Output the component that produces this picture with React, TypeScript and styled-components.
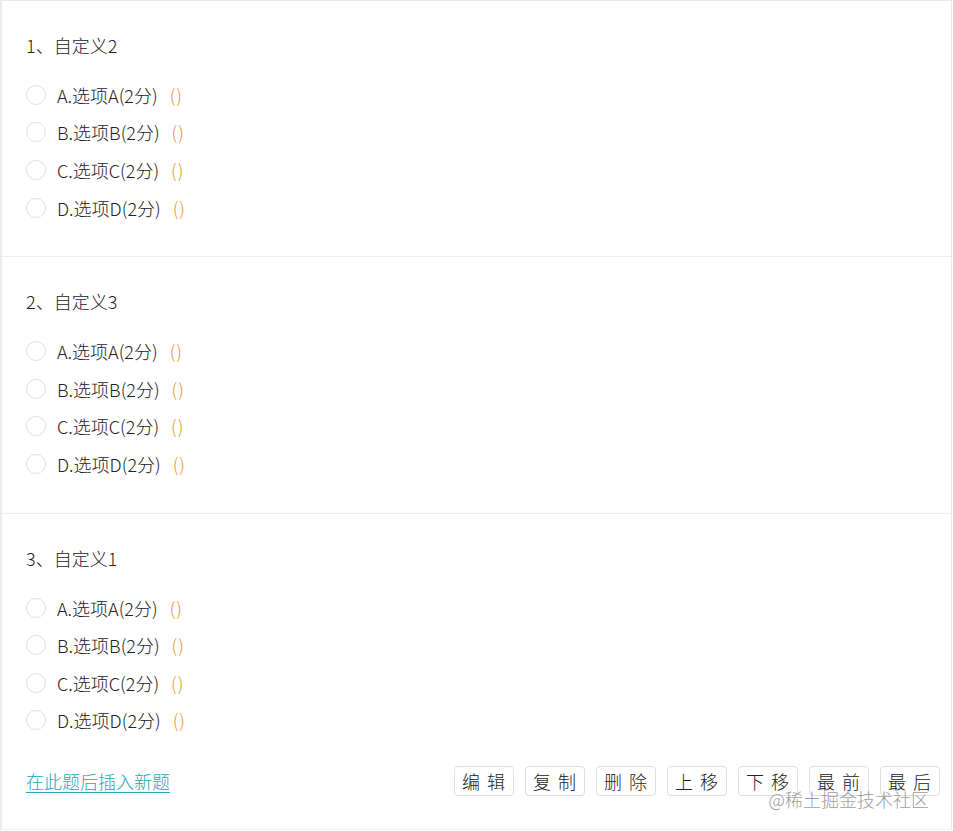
import React from "react";
import styled, { createGlobalStyle } from "styled-components";

const GlobalStyle = createGlobalStyle`
  html, body { margin: 0; padding: 0; background: #fff; }
  body { font-family: "Noto Sans CJK SC", "Noto Sans", sans-serif; color: #222; font-weight: 300; }
  * { box-sizing: border-box; }
`;

const Page = styled.div`
  position: relative;
  width: 952px;
  border-top: 1px solid #e8e8e8;
  border-left: 2px solid #ececec;
  border-right: 1px solid #e8e8e8;
`;

const Question = styled.section`
  padding: 32px 25px 30px 24px;
  border-bottom: 1px solid #eeeeee;
`;

const Title = styled.div`
  font-size: 18px;
  line-height: 24px;
  height: 24px;
  margin-bottom: 19px;
  color: #222;
`;

const OptionList = styled.div`
  display: flex;
  flex-direction: column;
`;

const OptionRow = styled.label`
  display: flex;
  align-items: center;
  height: 37.6px;
  font-size: 18px;
  color: #222;
`;

const OptionText = styled.span`
  letter-spacing: 0;
`;

const Radio = styled.span`
  width: 20px;
  height: 20px;
  border: 1px solid #dcdfe6;
  border-radius: 50%;
  background: #fff;
  margin-right: 11px;
  flex: none;
`;

const Blank = styled.span`
  color: #e5962e;
  margin-left: 12px;
  letter-spacing: 1px;
`;

const Footer = styled.div`
  display: flex;
  align-items: center;
  justify-content: space-between;
  margin-top: 28px;
  margin-right: -14px;
  height: 30px;
  padding-bottom: 2px;
  margin-bottom: 2px;
`;

const InsertLink = styled.a`
  font-size: 18px;
  color: #25a9b8;
  text-decoration: underline;
  text-underline-offset: 3px;
  cursor: pointer;
`;

const Buttons = styled.div`
  display: flex;
  gap: 11px;
`;

const ActionButton = styled.button`
  height: 30px;
  width: 60px;
  padding: 0 0 0 7px;
  border: 1px solid #dcdfe6;
  border-radius: 4px;
  background: #fff;
  color: #222;
  font-family: inherit;
  font-weight: 300;
  font-size: 18px;
  line-height: 28px;
  letter-spacing: 7px;
  text-align: left;
  white-space: nowrap;
  cursor: pointer;
`;

const Watermark = styled.div`
  position: absolute;
  right: 22px;
  bottom: 18px;
  font-size: 18px;
  color: rgba(120, 120, 120, 0.75);
  pointer-events: none;
`;

const options = ["A", "B", "C", "D"];
const questions = [
  { no: 1, title: "自定义2" },
  { no: 2, title: "自定义3" },
  { no: 3, title: "自定义1" },
];
const actions = ["编辑", "复制", "删除", "上移", "下移", "最前", "最后"];

export default function App() {
  return (
    <Page>
      <GlobalStyle />
      {questions.map((q, i) => (
        <Question key={q.no}>
          <Title>
            {q.no}、{q.title}
          </Title>
          <OptionList>
            {options.map((o) => (
              <OptionRow key={o}>
                <Radio />
                <OptionText>
                  {o}.选项{o}(2分)
                </OptionText>
                <Blank>()</Blank>
              </OptionRow>
            ))}
          </OptionList>
          {i === questions.length - 1 && (
            <Footer>
              <InsertLink>在此题后插入新题</InsertLink>
              <Buttons>
                {actions.map((a) => (
                  <ActionButton key={a}>{a}</ActionButton>
                ))}
              </Buttons>
            </Footer>
          )}
        </Question>
      ))}
      <Watermark>@稀土掘金技术社区</Watermark>
    </Page>
  );
}
